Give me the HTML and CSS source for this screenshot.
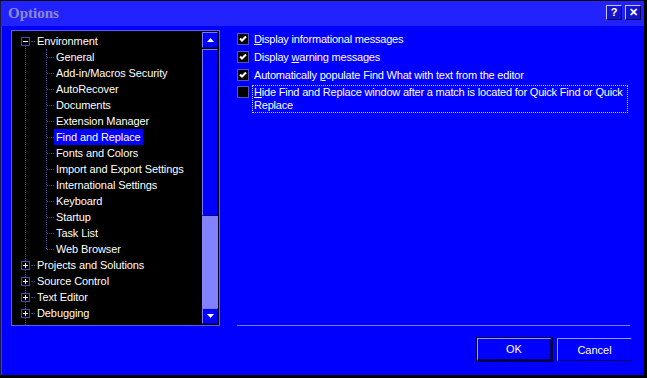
FILE: index.html
```html
<!DOCTYPE html>
<html lang="en">
<head>
  <meta charset="UTF-8">
  <title>Options</title>
  <link rel="stylesheet" href="styles.css">
</head>
<body>

<div class="window">

  <!-- TITLE BAR -->
  <div class="titlebar">
    <span class="title">Options</span>
    <div class="caption-buttons">
      <span class="caption-btn">?</span>
      <span class="caption-btn">✕</span>
    </div>
  </div>

  <div class="content">
    <div class="main">

      <!-- CATEGORY TREE -->
      <div class="tree-panel">
        <ul class="tree">
          <li class="node">
            <div class="row"><span class="expander"></span><span class="label">Environment</span></div>
            <ul class="children">
              <li><span class="label">General</span></li>
              <li><span class="label">Add-in/Macros Security</span></li>
              <li><span class="label">AutoRecover</span></li>
              <li><span class="label">Documents</span></li>
              <li><span class="label">Extension Manager</span></li>
              <li><span class="label selected">Find and Replace</span></li>
              <li><span class="label">Fonts and Colors</span></li>
              <li><span class="label">Import and Export Settings</span></li>
              <li><span class="label">International Settings</span></li>
              <li><span class="label">Keyboard</span></li>
              <li><span class="label">Startup</span></li>
              <li><span class="label">Task List</span></li>
              <li><span class="label">Web Browser</span></li>
            </ul>
          </li>
          <li class="node"><div class="row"><span class="expander plus"></span><span class="label">Projects and Solutions</span></div></li>
          <li class="node"><div class="row"><span class="expander plus"></span><span class="label">Source Control</span></div></li>
          <li class="node"><div class="row"><span class="expander plus"></span><span class="label">Text Editor</span></div></li>
          <li class="node"><div class="row"><span class="expander plus"></span><span class="label">Debugging</span></div></li>
          <li class="node"><div class="row"><span class="expander plus"></span><span class="label">Database Tools</span></div></li>
        </ul>

        <div class="scrollbar">
          <div class="sb-btn"><svg width="7" height="4" viewBox="0 0 7 4"><polygon points="3.5,0 7,4 0,4" fill="#fff"/></svg></div>
          <div class="sb-thumb"></div>
          <div class="sb-track"></div>
          <div class="sb-btn"><svg width="7" height="4" viewBox="0 0 7 4"><polygon points="0,0 7,0 3.5,4" fill="#fff"/></svg></div>
        </div>
      </div>

      <!-- FIND AND REPLACE PAGE -->
      <div class="page">
        <div class="checks">
          <div class="check-row">
            <span class="checkbox"><svg width="10" height="10" viewBox="0 0 10 10"><polyline points="2,4.5 4,6.5 8,2.5" fill="none" stroke="#fff" stroke-width="2"/></svg></span>
            <span class="check-label"><u>D</u>isplay informational messages</span>
          </div>
          <div class="check-row">
            <span class="checkbox"><svg width="10" height="10" viewBox="0 0 10 10"><polyline points="2,4.5 4,6.5 8,2.5" fill="none" stroke="#fff" stroke-width="2"/></svg></span>
            <span class="check-label">Display <u>w</u>arning messages</span>
          </div>
          <div class="check-row">
            <span class="checkbox"><svg width="10" height="10" viewBox="0 0 10 10"><polyline points="2,4.5 4,6.5 8,2.5" fill="none" stroke="#fff" stroke-width="2"/></svg></span>
            <span class="check-label">Automatically <u>p</u>opulate Find What with text from the editor</span>
          </div>
          <div class="check-row focused">
            <span class="checkbox"></span>
            <span class="check-label"><u>H</u>ide Find and Replace window after a match is located for Quick Find or Quick Replace</span>
          </div>
        </div>
        <div class="separator"></div>
      </div>
    </div>

    <!-- DIALOG BUTTONS -->
    <div class="buttons">
      <button class="btn default">OK</button>
      <button class="btn">Cancel</button>
    </div>
  </div>
</div>

</body>
</html>
```

FILE: styles.css
```css
/* --- Global --- */
html, body { margin: 0; padding: 0; background: #000; }
body { font-family: "Liberation Sans", Arial, sans-serif; font-size: 11px; color: #fff; }
ul { margin: 0; padding: 0; list-style: none; }

/* --- Window frame --- */
.window {
  width: 643px; height: 374px;
  background: #0000ff;
  border: 1px solid #000; border-left-color: #18184a;
  box-shadow: inset 1px 1px 0 #3434ff;
  display: flex; flex-direction: column;
}

.titlebar {
  height: 25px; background: #2222ff;
  display: flex; align-items: center;
  padding: 0 3px 0 7px;
}
.title { font-family: "Liberation Serif", serif; font-weight: bold; font-size: 15px; color: #8a8ac6; }
.caption-buttons { margin-left: auto; display: flex; gap: 3px; margin-top: -2px; }
.caption-btn {
  width: 14px; height: 13px;
  background: #1414d0; color: #fff;
  border: 1px solid; border-color: #c8c8ff #000050 #000050 #c8c8ff;
  font-size: 11px; font-weight: bold; line-height: 13px; text-align: center;
}

.content { flex: 1; display: flex; flex-direction: column; padding: 4px 12px 0 10px; }
.main { display: flex; height: 296px; }

/* --- Tree --- */
.tree-panel {
  width: 207px; height: 294px;
  border: 1px solid #5a5aff;
  background: #000;
  display: flex; overflow: hidden;
  box-sizing: content-box;
}
.tree { flex: 1; padding: 2px 0 0 1px; position: relative; overflow: hidden; letter-spacing: -0.1px; }
.tree::before {
  content: ""; position: absolute; left: 13px; top: 14px; bottom: 0;
  border-left: 1px dotted #4646a6;
}
.tree li { line-height: 16px; white-space: nowrap; }
.row { display: flex; align-items: center; height: 16px; padding-left: 8px; position: relative; }
.row::after {
  content: ""; position: absolute; left: 18px; top: 8px; width: 4px;
  border-top: 1px dotted #4646a6;
}
.label { padding: 0 2px; line-height: 16px; display: inline-block; }
.label.selected { background: #0000ff; }

.expander {
  width: 7px; height: 7px; margin-right: 5px;
  border: 1px solid #4848b4; background: #000;
  position: relative; z-index: 1;
}
.expander::before {
  content: ""; position: absolute; left: 1px; top: 3px; width: 5px; height: 1px; background: #fff;
}
.expander.plus::after {
  content: ""; position: absolute; left: 3px; top: 1px; width: 1px; height: 5px; background: #fff;
}

.children { position: relative; }
.children::before {
  content: ""; position: absolute; left: 33px; top: 0; bottom: 8px;
  border-left: 1px dotted #4646a6;
}
.children li { padding-left: 41px; position: relative; height: 16px; }
.children li::before {
  content: ""; position: absolute; left: 34px; top: 8px; width: 7px;
  border-top: 1px dotted #4646a6;
}

/* --- Scrollbar --- */
.scrollbar { width: 16px; display: flex; flex-direction: column; margin: 1px 1px 1px 0; }
.sb-btn, .sb-thumb {
  box-sizing: border-box;
  background: #0000ff;
  border: 1px solid; border-color: #7a7aff #00008a #00008a #7a7aff;
}
.sb-btn { height: 16px; display: flex; align-items: center; justify-content: center; }
.sb-thumb { height: 167px; margin-top: 1px; }
.sb-track { flex: 1; background: #8282ff; }

/* --- Options page --- */
.page { flex: 1; margin-left: 17px; display: flex; flex-direction: column; }
.checks { letter-spacing: -0.2px; padding-right: 4px; }
.check-row { display: flex; align-items: flex-start; }
.checkbox {
  width: 10px; height: 10px; margin-top: 3px; margin-right: 3px; flex: none;
  border: 1px solid #5454c4; background: #000;
  display: flex; align-items: center; justify-content: center;
}
.check-label { line-height: 14px; padding: 1px; border: 1px dotted transparent; }
.focused { margin-top: 1px; }
.focused .checkbox { margin-top: 1px; }
.focused .check-label {
  flex: 1; line-height: 13px; padding: 0 1px;
  border-color: #c8c8ff;
}
.separator { margin-top: auto; height: 1px; background: #7a7aff; margin-right: 2px; }

/* --- Buttons --- */
.buttons { display: flex; justify-content: flex-end; gap: 5px; margin-top: 12px; }
.btn {
  width: 75px; height: 23px;
  font-family: "Liberation Sans", Arial, sans-serif; font-size: 11px; color: #fff;
  background: #0000ff;
  border: 1px solid; border-color: #9a9aff #000060 #000060 #9a9aff;
  padding: 0;
}
.btn.default { border-width: 1px 2px 2px 1px; outline: 1px solid #000040; }
```
